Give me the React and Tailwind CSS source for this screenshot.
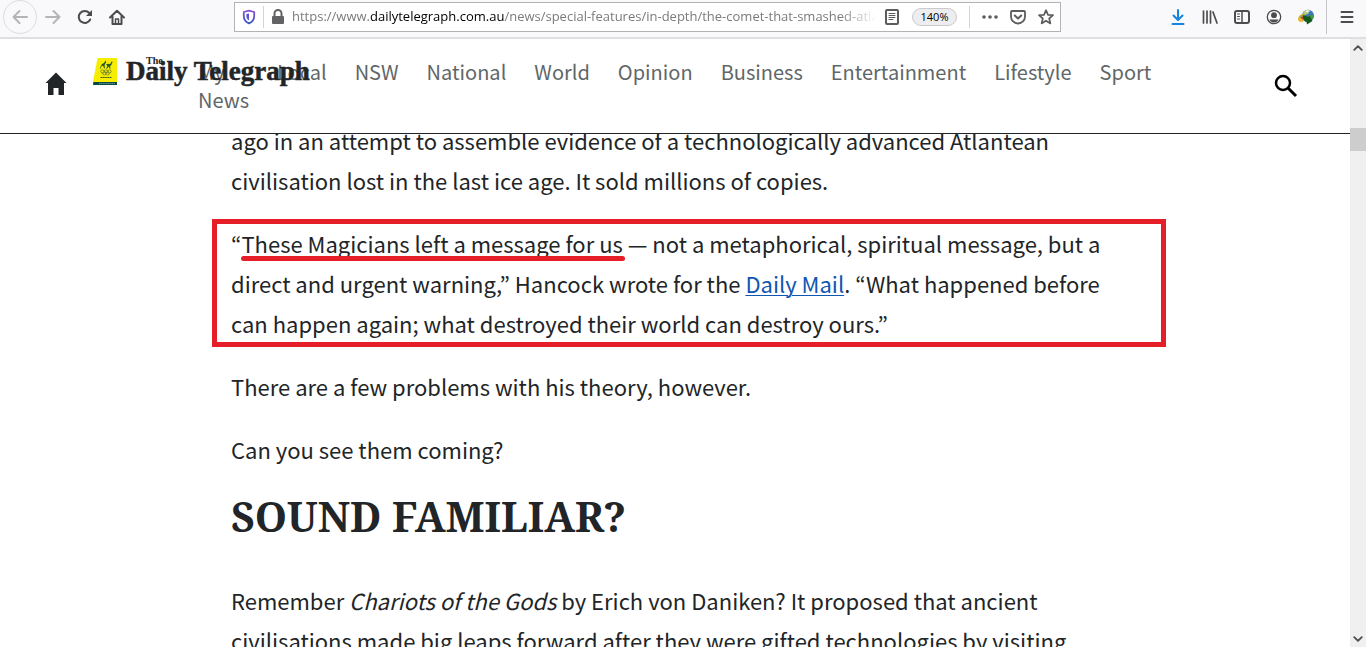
import React from 'react';

const navItems = ['NSW', 'National', 'World', 'Opinion', 'Business', 'Entertainment', 'Lifestyle', 'Sport'];

function IconButton({ label, className = 'text-[#4c4c4f]', children }) {
  return (
    <button type="button" aria-label={label} className={`flex h-8 w-8 shrink-0 items-center justify-center ${className}`}>
      {children}
    </button>
  );
}

function Svg({ children, size = 16, className = '' }) {
  return (
    <svg width={size} height={size} viewBox="0 0 16 16" fill="none" stroke="currentColor" strokeWidth="2" strokeLinecap="round" strokeLinejoin="round" className={`shrink-0 ${className}`} aria-hidden="true">
      {children}
    </svg>
  );
}

function AddressBar() {
  return (
    <div className="flex h-[30px] min-w-0 flex-1 items-center border border-[#b3b3b5] bg-white">
      <button type="button" aria-label="Tracking protection" className="flex w-7 shrink-0 justify-center">
        <Svg>
          <defs>
            <linearGradient id="shield" x1="0" y1="0" x2="0" y2="1">
              <stop offset="0" stopColor="#8a4fd0" />
              <stop offset="1" stopColor="#3557c8" />
            </linearGradient>
          </defs>
          <path d="M8 1.700 13.200 3v4c0 3.600-1.600 5.800-5.200 7.400C4.400 12.800 2.800 10.600 2.800 7V3z" stroke="url(#shield)" strokeWidth="1.800" />
          <path d="M8 4.500v7C6 10.200 5.400 9 5.400 7V5z" fill="#5a54cf" stroke="none" />
        </Svg>
      </button>
      <span className="h-[22px] w-px shrink-0 bg-[#d4d4d6]" />
      <Svg className="mx-1.5 text-[#636366]">
        <path d="M4.500 7V4.500a3.500 3.500 0 0 1 7 0V7" />
        <rect x="2" y="7" width="12" height="8" rx="1" fill="currentColor" stroke="none" />
      </Svg>
      <div className="min-w-0 flex-1 overflow-hidden whitespace-nowrap font-['Open_Sans',sans-serif] text-[13px] text-[#7b7b7e] [mask-image:linear-gradient(to_left,transparent,black_36px)]">
        https://www.<span className="text-black">dailytelegraph.com.au</span>/news/special-features/in-depth/the-comet-that-smashed-atlantis
      </div>
      <button type="button" aria-label="Reader view" className="flex w-8 shrink-0 justify-center text-[#5c5c5f]">
        <Svg>
          <rect x="2" y="1" width="12" height="14" rx="1" />
          <path d="M5 4.500h6M5 6.500h6M5 8.500h6M5 10.500h4" strokeWidth="1" />
        </Svg>
      </button>
      <button type="button" className="ml-1 h-[18px] w-[45px] shrink-0 rounded-full border border-[#cbcbcd] bg-[#ededf0] font-['Open_Sans',sans-serif] text-[11px] leading-4 text-black">140%</button>
      <span className="ml-3 h-[22px] w-px shrink-0 bg-[#d4d4d6]" />
      <div className="ml-3 mr-1.5 flex shrink-0 gap-3 text-[#5c5c5f]">
        <button type="button" aria-label="Page actions">
          <Svg>
            <g fill="currentColor" stroke="none"><circle cx="2" cy="8" r="1.800" /><circle cx="8" cy="8" r="1.800" /><circle cx="14" cy="8" r="1.800" /></g>
          </Svg>
        </button>
        <button type="button" aria-label="Save to Pocket">
          <Svg>
            <path d="M2 2h12a1 1 0 0 1 1 1v4.500a7 7 0 0 1-14 0V3a1 1 0 0 1 1-1z" strokeWidth="1.800" />
            <path d="m4.800 6.500 3.200 3 3.200-3" />
          </Svg>
        </button>
        <button type="button" aria-label="Bookmark this page">
          <Svg><path d="m8 1.200 2 4.600 5 .4-3.800 3.300 1.200 4.900L8 11.800l-4.400 2.600 1.200-4.900L1 6.200l5-.4z" strokeWidth="1.700" /></Svg>
        </button>
      </div>
    </div>
  );
}

function BrowserBar() {
  return (
    <div className="flex h-[39px] shrink-0 items-start border-b-2 border-[#dfdfe1] bg-[#f9f9fb]">
      <div className="flex h-[34px] w-[234px] shrink-0 items-center pl-[3px]">
        <button type="button" aria-label="Back" className="flex h-[34px] w-[34px] items-center justify-center rounded-full border border-[#dcdcde] text-[#b4b4b6]">
          <Svg><path d="M15 8H1.500M7.500 2l-6 6 6 6" /></Svg>
        </button>
        <IconButton label="Forward" className="text-[#b4b4b6]"><Svg><path d="M1 8h13.500M8.500 2l6 6-6 6" /></Svg></IconButton>
        <IconButton label="Reload"><Svg><path d="M13.200 10.500A6 6 0 1 1 12.300 4" /><path d="M15 1v6H9z" fill="currentColor" stroke="none" /></Svg></IconButton>
        <IconButton label="Home"><Svg><path d="M1 8.500 8 1.700l7 6.800M3.500 7.500V15h9V7.500" /><path d="M6.500 14.500v-4.500h3v4.500" strokeWidth="1.500" /></Svg></IconButton>
      </div>
      <div className="flex h-[34px] min-w-0 flex-1 items-center"><AddressBar /></div>
      <div className="flex h-[34px] w-[305px] shrink-0 items-center justify-end">
        <IconButton label="Downloads" className="text-[#1683e0]"><Svg><path d="M8 1v9.500M3.500 6.500 8 11l4.500-4.500M2.500 15h11" /></Svg></IconButton>
        <IconButton label="Library"><Svg><path d="M1.500 2v12M5 2v12M8.500 2v12M11 3l4 11" strokeWidth="1.700" /></Svg></IconButton>
        <IconButton label="Sidebars"><Svg><rect x="1" y="2" width="14" height="12" rx="2" /><path d="M8 2v12" strokeWidth="1.500" /><path d="M3.500 5h2M3.500 7.500h2M3.500 10h2" strokeWidth="1" /></Svg></IconButton>
        <IconButton label="Account"><Svg><circle cx="8" cy="8" r="6.700" strokeWidth="1.300" /><circle cx="8" cy="6.200" r="2.900" fill="currentColor" stroke="none" /><path d="M3.500 10.500h9c-.8 2-2.500 3-4.500 3s-3.700-1-4.500-3z" fill="currentColor" stroke="none" /></Svg></IconButton>
        <IconButton label="Download manager">
          <Svg>
            <g stroke="none">
              <circle cx="10" cy="6.800" r="6" fill="#3b78bd" />
              <path d="M5 3.500C7 1 10 .5 12 1l-2 4-4 1z" fill="#b5cf73" />
              <path d="M7 2.500c2-1.500 4-1.500 5-.7l-2 1.700z" fill="#dfeff7" />
              <path d="M11 6c2 0 3 1 4.500 0 .5 2-.5 4-2 5l-4-1z" fill="#4c983c" />
              <path d="M0 9.500C1 6 4 4 7 5l-1.500 3L8 11l-4 2C1 13 -.5 11.500 0 9.500z" fill="#e9b83b" />
              <path d="M1 8.500C2 6.500 4 5.500 6 5.500l-1 2-3 1.500z" fill="#8fb548" />
              <path d="M2.500 8.800c1-1.500 3-1.800 4.500-.3l-2 2.300z" fill="#c84335" />
              <path d="m5 6 5.500 2 1-1.500L14.500 12l-5.500 3.500-.5-2.500C6 12.500 4.500 10 5 6z" fill="#135b1d" />
            </g>
          </Svg>
        </IconButton>
        <span className="ml-1 h-[34px] w-px bg-[#c5c5c8]" />
        <IconButton label="Open menu" className="ml-1 mr-[3px] text-[#4c4c4f]"><Svg><path d="M2.500 3h11M2.500 8h11M2.500 13h11" /></Svg></IconButton>
      </div>
    </div>
  );
}

function Masthead() {
  return (
    <a href="#home" aria-label="The Daily Telegraph" className="absolute left-[92px] top-[18px] flex items-start text-[#222527]">
      <svg width="26" height="30" viewBox="0 0 26 30" aria-hidden="true">
        <path d="M5.500 1H25v24H1z" fill="#f6ed00" />
        <path d="M1.300 25H25v3H1z" fill="#064b43" />
        <path d="M7 26.500h16" stroke="#86a59a" strokeWidth=".8" strokeDasharray="1.500 .6" />
        <g fill="#27552b">
          <path d="m8 11 2-4 2-1 1.500-2.500.7 1.500-.7 1.300-1 2 .5 3h-1l-.8-2.500-1.700.5L8.500 12z" />
          <path d="m14 7.500 2-.7 2 .5 1.500-2.800 1.500.6-1 .6-.6 2.400-1.500 1.200.8 2.300h-1l-1-2-1.500 2H14l1.500-2.500z" />
        </g>
        <g fill="none" stroke="#718332" strokeWidth=".8"><circle cx="10.500" cy="14.500" r="1.700" /><circle cx="14" cy="14.500" r="1.700" /><circle cx="17.500" cy="14.500" r="1.700" /><circle cx="12.300" cy="16.300" r="1.700" /><circle cx="15.700" cy="16.300" r="1.700" /></g>
        <path d="M8.500 20.500h11" stroke="#3b5820" strokeDasharray="1.500 .4" />
      </svg>
      <span className="relative ml-2 whitespace-nowrap font-['Liberation_Serif',serif] text-[27px] font-bold leading-[28px] [-webkit-text-stroke:0.5px_#222527]">
        Daily Telegraph
        <span className="absolute left-5 top-0 text-[10px] leading-[8px] [-webkit-text-stroke:0px]">The</span>
      </span>
    </a>
  );
}

function SiteHeader() {
  return (
    <header className="relative flex h-[95px] shrink-0 border-b border-[#222527] bg-white text-[#5f6769]">
      <a href="#home" aria-label="Home" className="absolute left-[45px] top-8 text-[#222527]">
        <svg width="22" height="24" viewBox="0 0 22 24" fill="currentColor" aria-hidden="true"><path d="M11 1.500 21.500 12H19v12h-5.500v-7h-5v7H3V12H.5z" /></svg>
      </a>
      <nav aria-label="Sections" className="ml-[198px] mt-[19px] flex items-start gap-7 whitespace-nowrap font-['Noto_Sans_CJK_KR',sans-serif] text-[20px] leading-7">
        <a href="#my-news" className="w-[51px]">My<br />News</a>
        <a href="#local">Local</a>
        {navItems.map((item) => <a key={item} href={`#${item.toLowerCase()}`}>{item}</a>)}
      </nav>
      <Masthead />
      <button type="button" aria-label="Search" className="absolute right-[52px] top-[35px] text-black">
        <svg width="24" height="24" viewBox="0 0 24 24" fill="none" stroke="currentColor" strokeWidth="2.500" aria-hidden="true"><circle cx="9" cy="9" r="7" /><path d="m14 14 8 8" strokeWidth="3" /></svg>
      </button>
    </header>
  );
}

function Article() {
  return (
    <main className="min-h-0 flex-1 overflow-hidden pl-[231px] font-['Noto_Sans_CJK_KR',sans-serif] text-[22px] leading-10 text-[#222527]">
      <div className="-mt-3.5 w-[916px]">
        <p>ago in an attempt to assemble evidence of a technologically advanced Atlantean<br />civilisation lost in the last ice age. It sold millions of copies.</p>
        <p className="relative mt-[23px]">
          “<span className="relative">These Magicians left a message for us<span className="absolute -bottom-0.5 -right-0.5 left-0 h-[5px] rounded-full bg-[#e61e28]" /></span> — not a metaphorical, spiritual message, but a<br />
          direct and urgent warning,” Hancock wrote for the <a href="#daily-mail" className="text-[#0f56b3] underline decoration-1 underline-offset-2">Daily Mail</a>. “What happened before<br />
          can happen again; what destroyed their world can destroy ours.”
          <span className="pointer-events-none absolute -bottom-1 -left-[19px] -right-[19px] -top-1 border-5 border-[#e61e28]" />
        </p>
        <p className="mt-[23px]">There are a few problems with his theory, however.</p>
        <p className="mt-[23px]">Can you see them coming?</p>
        <h2 className="mt-[19px] font-['Noto_Serif','Liberation_Serif',serif] text-[41px] font-bold leading-[56px]">SOUND FAMILIAR?</h2>
        <p className="mt-9">Remember <em>Chariots of the Gods</em> by Erich von Daniken? It proposed that ancient<br />civilisations made big leaps forward after they were gifted technologies by visiting</p>
      </div>
    </main>
  );
}

export default function App() {
  return (
    <div className="flex h-screen flex-col overflow-hidden bg-white">
      <BrowserBar />
      <div className="flex min-h-0 flex-1">
        <div className="flex min-w-0 flex-1 flex-col">
          <SiteHeader />
          <Article />
        </div>
        <div className="flex w-4 shrink-0 flex-col items-center bg-[#f0f0f0] text-[#505050]">
          <button type="button" aria-label="Scroll up" className="flex h-[17px] items-center"><Svg size={10}><path d="m2 11 6-6 6 6" strokeWidth="3" /></Svg></button>
          <div className="mt-[72px] h-[23px] w-full bg-[#cdcdcd]" />
          <button type="button" aria-label="Scroll down" className="mt-auto flex h-[17px] items-center"><Svg size={10}><path d="m2 5 6 6 6-6" strokeWidth="3" /></Svg></button>
        </div>
      </div>
    </div>
  );
}
